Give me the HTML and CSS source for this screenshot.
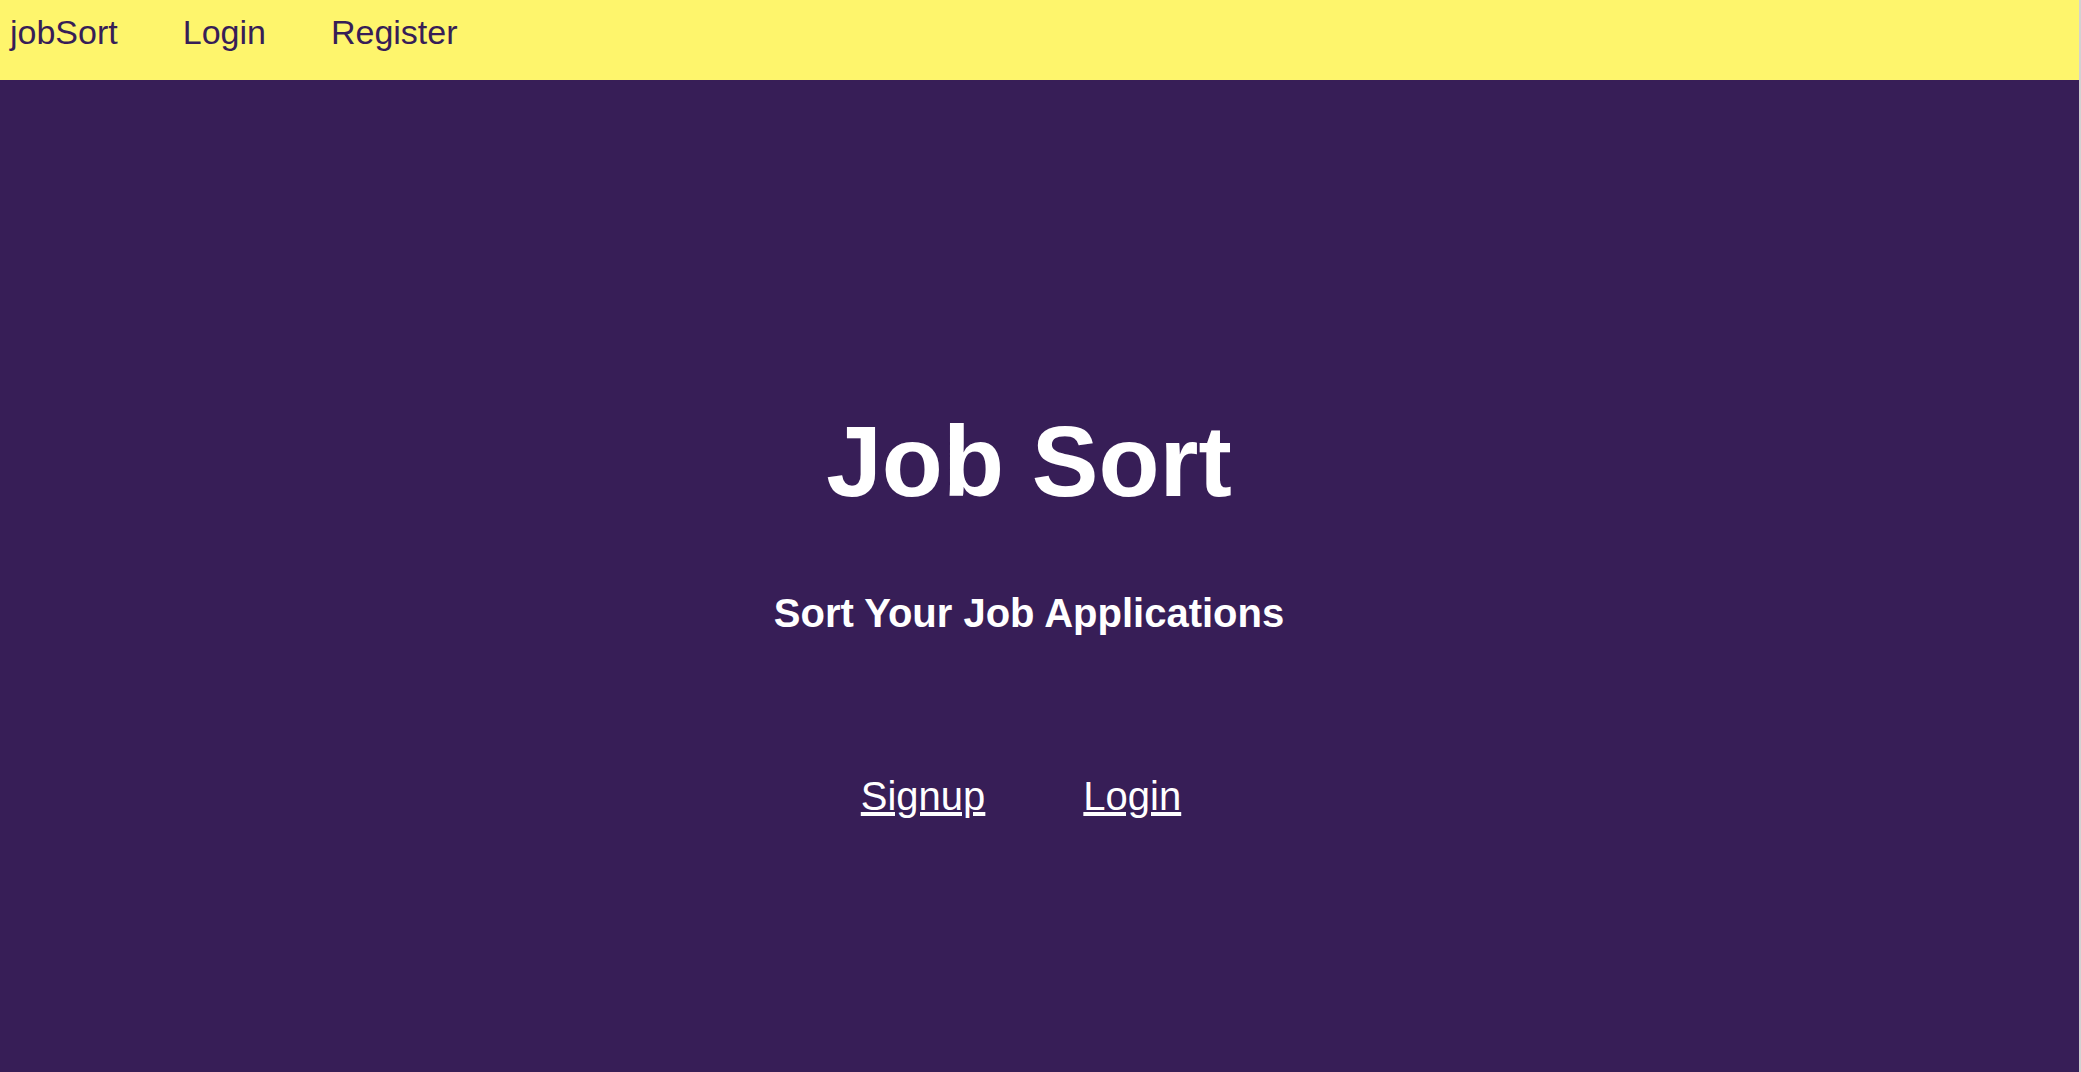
FILE: index.html
```html
<!DOCTYPE html>
<html lang="en">
<head>
<meta charset="utf-8">
<title>jobSort</title>
<link rel="stylesheet" href="styles.css">
</head>
<body>
<div class="page">
  <nav class="nav">
    <a class="nav-link" href="#">jobSort</a>
    <a class="nav-link" href="#">Login</a>
    <a class="nav-link" href="#">Register</a>
  </nav>
  <main class="hero">
    <h1 class="hero-title">Job Sort</h1>
    <h2 class="hero-sub">Sort Your Job Applications</h2>
    <div class="hero-links">
      <a class="hero-link" href="#">Signup</a>
      <a class="hero-link" href="#">Login</a>
    </div>
  </main>
</div>
</body>
</html>
```
FILE: styles.css
```css
html, body {
  margin: 0;
  padding: 0;
  height: 100%;
}
body {
  background: #d2d2d2;
  font-family: "Liberation Sans", Arial, Helvetica, sans-serif;
}
.page {
  width: calc(100% - 2px);
  height: 100%;
  display: flex;
  flex-direction: column;
  background: #371e57;
}
.nav {
  height: 80px;
  box-sizing: border-box;
  background: #fef56c;
  display: flex;
  align-items: flex-start;
  gap: 65px;
  padding: 15px 0 0 10px;
}
.nav-link {
  font-size: 34px;
  line-height: 1;
  color: #371e57;
  text-decoration: none;
}
.hero {
  flex: 1;
  display: flex;
  flex-direction: column;
  align-items: center;
  padding: 331px 21px 0 0;
  color: #ffffff;
}
.hero-title {
  margin: 0;
  font-size: 100px;
  line-height: 1;
  font-weight: bold;
}
.hero-sub {
  margin: 82px 0 0;
  font-size: 40px;
  line-height: 1;
  font-weight: bold;
}
.hero-links {
  margin: 143px 16px 0 0;
  display: flex;
  gap: 98px;
}
.hero-link {
  font-size: 40px;
  line-height: 1;
  color: #ffffff;
  text-decoration: underline;
}
```
